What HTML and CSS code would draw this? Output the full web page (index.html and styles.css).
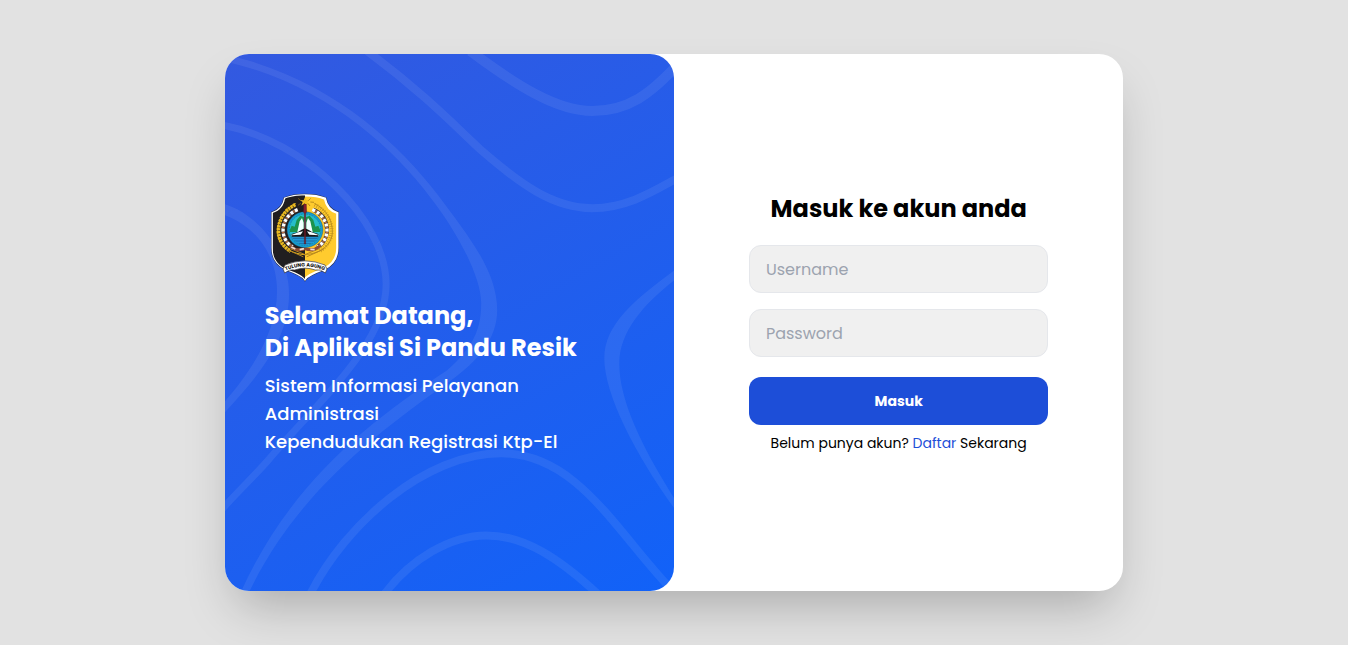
FILE: index.html
```html
<!DOCTYPE html>
<html lang="id">
<head>
<meta charset="utf-8">
<meta name="viewport" content="width=device-width, initial-scale=1">
<title>Masuk - Si Pandu Resik</title>
<link rel="stylesheet" href="styles.css">
</head>
<body>
<main class="card">
  <section class="welcome">
    <svg class="waves" viewBox="0 0 449 537" preserveAspectRatio="none" aria-hidden="true">
      <g fill="none" stroke="#fff" stroke-opacity=".07">
        <path stroke-width="8" d="M142-3C200 40 235 77 257 97C295 130 328 154 367 154C400 154 425 139 452 124"/>
        <path stroke-width="10" d="M245-3C292 32 332 57 367 57C403 57 425 40 452 11"/>
        <path stroke-width="7" d="M-3 71C80 86 161 165 161 230C161 290 95 345 43 406C28 423 10 440-3 455"/>
        <path stroke-width="8" d="M85 540C120 470 200 399 276 399C355 399 395 485 452 541"/>
        <path stroke-width="8" d="M159 540C185 505 225 481 261 481C300 481 335 505 373 540"/>
      </g>
      <g fill="#fff" fill-opacity=".07">
        <path d="M-2 0C100 22 170 85 213 141C240 178 272 215 272 256C272 285 252 307 226 326C150 380 70 440 23 540L16 537C65 430 140 370 222 316C248 293 256 275 256 249C256 220 228 172 205 143C165 90 95 28-2 7Z"/>
        <path d="M0 150C35 161 64 200 64 240C64 290 25 330 0 358V347C22 322 52 280 52 237C52 200 30 172 0 161Z"/>
        <path d="M449 216C410 245 379 270 379 304C379 340 410 400 449 454V444C415 390 394 345 394 309C394 278 418 250 449 226Z"/>
      </g>
    </svg>
    <div class="intro">
      <svg class="crest" viewBox="0 0 240 288" role="img" aria-label="Lambang Tulungagung">
        <defs>
          <path id="shield" d="M120 22C96 22 74 26 60 32C56 54 44 68 23 75V180C23 210 36 230 64 243C88 252 110 260 120 273C130 260 152 252 176 243C204 230 217 210 217 180V75C196 68 184 54 180 32C166 26 144 22 120 22Z"/>
          <clipPath id="shieldClip"><use href="#shield"/></clipPath>
          <clipPath id="discClip"><circle cx="120" cy="125" r="46"/></clipPath>
          <path id="motto" d="M61 248Q120 223 179 248"/>
        </defs>
        <use href="#shield" fill="none" stroke="#26304f" stroke-width="10"/>
        <use href="#shield" fill="#ffcb2e" stroke="#fff" stroke-width="7"/>
        <path clip-path="url(#shieldClip)" fill="#201e20" d="M0 0H120V288H0Z"/>
        <g fill="none" stroke-linecap="round">
          <path stroke="#e9b91f" stroke-width="3" d="M91 47C53 65 37 100 38 134C40 170 70 196 119 200"/>
          <path stroke="#e9b91f" stroke-width="11" stroke-dasharray="7 2" stroke-linecap="butt" d="M91 50C55 68 40 99 40 132C42 157 53 174 77 190"/>
          <path stroke="#94701a" stroke-width="2" d="M149 47C187 65 203 100 202 134C200 170 170 196 121 200"/>
          <path stroke="#c2921a" stroke-width="12" stroke-dasharray="2 5" stroke-linecap="butt" d="M149 50C185 68 200 99 200 132C198 157 187 174 163 190"/>
          <path stroke="#b78620" stroke-width="3" d="M65 184L114 206M77 182L121 200M175 184L126 206M163 182L119 200"/>
        </g>
        <g fill="none">
          <path stroke="#3a3430" stroke-width="12" d="M96 65C44 87 41 153 83 177M144 65C196 87 199 153 157 177"/>
          <path stroke="#fff" stroke-width="10" stroke-dasharray="9 6" d="M98 65C44 87 41 153 83 177M142 65C196 87 199 153 157 177"/>
          <path stroke="#b96d45" stroke-width="8" stroke-dasharray="4 11" stroke-dashoffset="5" d="M98 65C44 87 41 153 83 177M142 65C196 87 199 153 157 177"/>
          <path stroke="#8f4b32" stroke-width="9" d="M76 174Q96 192 120 182Q144 192 164 174"/>
          <path stroke="#f1ded0" stroke-width="5" d="M79 177L91 183M104 185L117 182M136 184L149 185"/>
        </g>
        <circle cx="120" cy="125" r="54" fill="#159bd0" stroke="#333" stroke-width="1"/>
        <circle cx="120" cy="125" r="47" fill="#27bdc9" stroke="#15739b" stroke-width="2" stroke-dasharray="5 3"/>
        <g clip-path="url(#discClip)">
          <path fill="#1b934d" d="M72 132L80 113L89 116L95 96L106 83L117 88V132ZM168 132L160 113L151 116L145 96L134 83L123 88V132Z"/>
          <path fill="#efffff" d="M97 132L104 100L111 90L116 104V132ZM143 132L136 100L129 90L124 104V132Z"/>
          <path fill="#171719" d="M80 138L99 132L110 125L120 121L130 125L141 132L160 138V147H80Z"/>
          <path fill="#2197d6" d="M72 146H168V180H72Z"/>
          <path stroke="#155b91" stroke-width="2" d="M75 151H165M76 159H164M84 167H156"/>
          <path fill="#f5ffff" d="M77 142L100 133L114 130L107 140ZM163 142L140 133L126 130L133 140Z"/>
        </g>
        <path fill="#871e2c" stroke="#35151b" stroke-width="1" d="M116 48H124L125 72L122 76V168H118V76L115 72Z"/>
        <path fill="#f0bd20" d="M120 27L124 36L135 35L127 42L132 52L120 46L109 53L113 42L104 36L116 37Z"/>
        <path stroke="#946d13" stroke-width="2" d="M99 31L107 37M99 52L108 45M137 31L130 38M135 54L129 46M147 43L136 42"/>
        <path fill="#fff" stroke="#302f33" stroke-width="2" d="M60 231Q120 206 180 231L186 243L181 255Q166 242 151 246Q120 235 89 246Q74 242 59 255L54 243Z"/>
        <text class="motto"><textPath href="#motto" startOffset="50%">TULUNG AGUNG</textPath></text>
      </svg>
      <h1 class="welcome-title">Selamat Datang,<br>Di Aplikasi Si Pandu Resik</h1>
      <p class="summary">Sistem Informasi Pelayanan<br>Administrasi<br>Kependudukan Registrasi Ktp-El</p>
    </div>
  </section>
  <section class="login">
    <form class="form">
      <h2 class="form-title">Masuk ke akun anda</h2>
      <div class="fields">
        <input class="field" type="text" name="username" placeholder="Username" aria-label="Username" autocomplete="username">
        <input class="field" type="password" name="password" placeholder="Password" aria-label="Password" autocomplete="current-password">
      </div>
      <button class="submit" type="submit">Masuk</button>
      <p class="signup">Belum punya akun? <a class="link" href="#daftar">Daftar</a> Sekarang</p>
    </form>
  </section>
</main>
</body>
</html>
```
FILE: styles.css
```css
*, *::before, *::after { box-sizing: border-box; }

body {
  margin: 0;
  min-height: 100vh;
  display: grid;
  place-items: center;
  background: #e2e2e2;
  color: #000;
  font-family: Poppins, Inter, "Liberation Sans", sans-serif;
}

h1, h2, p { margin: 0; }

.card {
  width: 66.6667%;
  min-height: 83.3333vh;
  display: grid;
  grid-template-columns: 1fr 1fr;
  border-radius: 24px;
  background: #fff;
  box-shadow: 0 25px 50px -12px rgba(0, 0, 0, .25);
}

.welcome {
  position: relative;
  display: flex;
  align-items: center;
  padding: 32px 40px;
  overflow: hidden;
  border-radius: 24px;
  background: linear-gradient(150deg, #3359e0, #1162f8);
  color: #fff;
}

.waves {
  position: absolute;
  inset: 0;
  width: 100%;
  height: 100%;
}

.intro { position: relative; }

.crest {
  display: block;
  width: 80px;
  height: 96px;
  margin-bottom: 16px;
}

.motto {
  fill: #111;
  font-size: 15px;
  font-weight: 700;
  text-anchor: middle;
}

.welcome-title {
  margin-bottom: 8px;
  font-size: 24px;
  line-height: 32px;
  font-weight: 700;
  white-space: nowrap;
}

.summary {
  font-size: 18px;
  line-height: 28px;
  font-weight: 500;
  white-space: nowrap;
}

.login {
  display: flex;
  align-items: center;
  justify-content: center;
  padding-top: 2px;
}

.form {
  width: 66.6667%;
  display: flex;
  flex-direction: column;
}

.form-title {
  margin-bottom: 20px;
  font-size: 24px;
  line-height: 32px;
  font-weight: 700;
  text-align: center;
  white-space: nowrap;
}

.fields {
  display: grid;
  gap: 16px;
  margin-bottom: 20px;
}

.field {
  width: 100%;
  height: 48px;
  padding: 0 16px;
  border: 1px solid #e5e7eb;
  border-radius: 12px;
  background: #f0f0f0;
  color: #000;
  font: 400 16px/24px Poppins, Inter, "Liberation Sans", sans-serif;
}

.field::placeholder { color: #9ca3af; opacity: 1; }

.submit {
  height: 48px;
  margin-bottom: 8px;
  border: 0;
  border-radius: 12px;
  background: #1d4ed8;
  color: #fff;
  font: 700 14px/20px Poppins, Inter, "Liberation Sans", sans-serif;
  cursor: pointer;
}

.signup {
  font-size: 14px;
  line-height: 20px;
  text-align: center;
  white-space: nowrap;
}

.link { color: #1d4ed8; text-decoration: none; }
```
